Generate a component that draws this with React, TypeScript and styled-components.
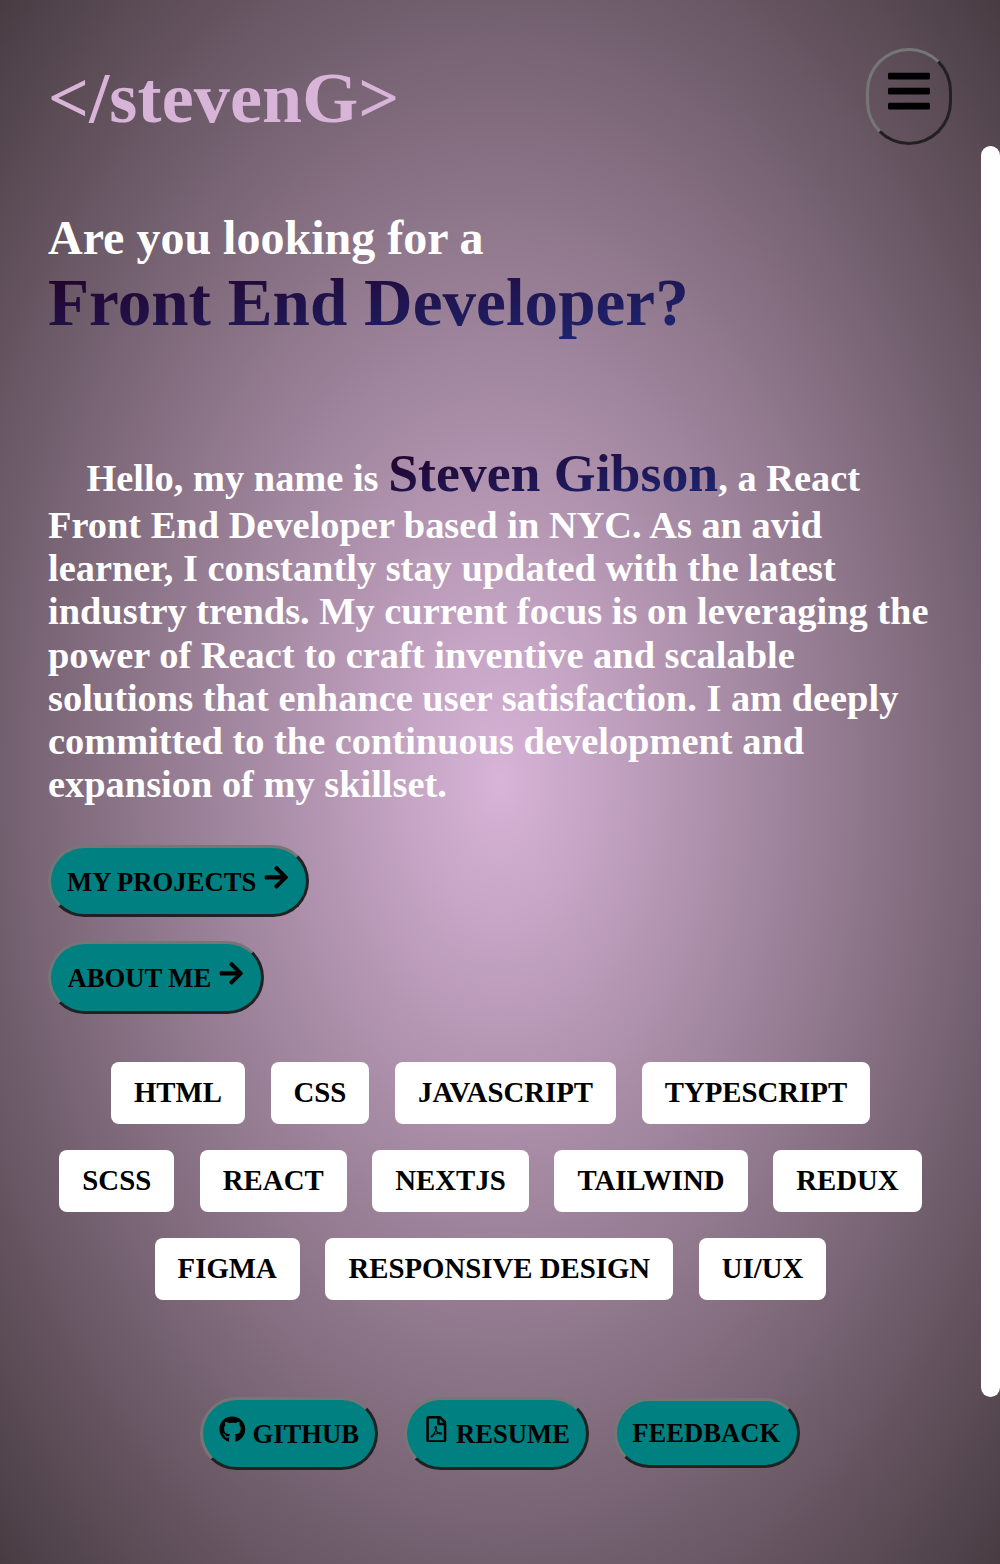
import React from "react";
import styled, { createGlobalStyle } from "styled-components";
import { FaArrowRight, FaGithub, FaRegFilePdf, FaBars } from "react-icons/fa";

const GlobalStyle = createGlobalStyle`
  * { box-sizing: border-box; }
  body { margin: 0; background: #4a3f45; font-family: "Liberation Serif", "Times New Roman", serif; }
`;

const Page = styled.div`
  position: relative;
  height: 1564px;
  padding: 48px 48px 0;
  overflow: hidden;
  font-weight: 700;
  background: radial-gradient(#d8b4d8, #483c42);
`;

const ScrollThumb = styled.div`
  position: absolute;
  top: 145.6px;
  right: 0;
  width: 19.2px;
  height: 1251.4px;
  border-radius: 10px;
  background: #fff;
`;

const Header = styled.header`
  display: flex;
  justify-content: space-between;
  align-items: flex-start;
  height: 97px;
`;

const Logo = styled.h1`
  margin: 9px 0 0;
  font-size: 72px;
  line-height: 82px;
  letter-spacing: 0.15px;
  color: #d8b4d8;
`;

const MenuButton = styled.button`
  display: flex;
  justify-content: center;
  width: 86px;
  height: 97px;
  padding: 16px 0 0;
  border: 3px solid;
  border-color: #767676 #212121 #212121 #767676;
  border-radius: 48px;
  background: transparent;
  color: #000;
  font-size: 48px;
`;

const gradientText = `
  background: linear-gradient(to bottom right, #240024, #1c2878);
  -webkit-background-clip: text;
  background-clip: text;
  color: transparent;
`;

const Headline = styled.h2`
  display: flex;
  flex-direction: column;
  align-items: flex-start;
  margin: 65px 0 0;
  font-size: 48px;
  line-height: 55px;
  color: #fff;
`;

const Role = styled.span`
  font-size: 67.2px;
  line-height: 76px;
  ${gradientText}
`;

const Intro = styled.p`
  width: 884px;
  margin: 101px 0 0;
  font-size: 38.4px;
  line-height: 43.2px;
  text-indent: 38.4px;
  color: #fff;
`;

const Name = styled.span`
  font-size: 53.76px;
  line-height: 62px;
  ${gradientText}
`;

const Actions = styled.div`
  display: flex;
  flex-direction: column;
  align-items: flex-start;
  gap: 24px;
  margin-top: 39px;
`;

const PillButton = styled.button<{ $w: number; $h: number }>`
  display: flex;
  align-items: center;
  justify-content: center;
  gap: 6.65px;
  width: ${(p) => p.$w}px;
  height: ${(p) => p.$h}px;
  padding: 2px 0 0;
  border: 3px solid;
  border-color: #767676 #212121 #212121 #767676;
  border-radius: 40px;
  background: #008080;
  color: #000;
  font: 700 26.65px/31px "Liberation Serif", "Times New Roman", serif;
  white-space: nowrap;
  svg { flex: none; margin-top: -11px; }
`;

const TextPill = styled(PillButton)`
  padding: 0 2px 0 0;
`;

const Skills = styled.ul`
  display: flex;
  flex-direction: column;
  gap: 25.6px;
  width: 885px;
  margin: 47.6px 0 0;
  padding: 0;
  list-style: none;
`;

const SkillRow = styled.li`
  display: flex;
  justify-content: center;
  gap: 25.6px;
`;

const Skill = styled.span`
  height: 62.4px;
  padding: 14px 23.04px 0;
  border-radius: 8px;
  background: #fff;
  color: #000;
  font-size: 28.8px;
  line-height: 33px;
`;

const Footer = styled.footer`
  display: flex;
  justify-content: center;
  align-items: center;
  gap: 25.6px;
  margin-top: 96.6px;
`;

const skills = [
  ["HTML", "CSS", "JAVASCRIPT", "TYPESCRIPT"],
  ["SCSS", "REACT", "NEXTJS", "TAILWIND", "REDUX"],
  ["FIGMA", "RESPONSIVE DESIGN", "UI/UX"],
];

export default function App() {
  return (
    <>
      <GlobalStyle />
      <Page>
        <Header>
          <Logo>&lt;/stevenG&gt;</Logo>
          <MenuButton aria-label="Menu"><FaBars /></MenuButton>
        </Header>
        <Headline>
          Are you looking for a
          <Role>Front End Developer?</Role>
        </Headline>
        <Intro>
          Hello, my name is <Name>Steven Gibson</Name>, a React Front End Developer based in NYC.
          As an avid learner, I constantly stay updated with the latest industry trends. My current
          focus is on leveraging the power of React to craft inventive and scalable solutions that
          enhance user satisfaction. I am deeply committed to the continuous development and
          expansion of my skillset.
        </Intro>
        <Actions>
          <PillButton $w={260.6} $h={72}>MY PROJECTS <FaArrowRight /></PillButton>
          <PillButton $w={216} $h={73}>ABOUT ME <FaArrowRight /></PillButton>
        </Actions>
        <Skills>
          {skills.map((row) => (
            <SkillRow key={row[0]}>
              {row.map((s) => <Skill key={s}>{s}</Skill>)}
            </SkillRow>
          ))}
        </Skills>
        <Footer>
          <PillButton $w={178.6} $h={73}><FaGithub />GITHUB</PillButton>
          <PillButton $w={184.6} $h={73}><FaRegFilePdf />RESUME</PillButton>
          <TextPill $w={186} $h={70}>FEEDBACK</TextPill>
        </Footer>
        <ScrollThumb />
      </Page>
    </>
  );
}
